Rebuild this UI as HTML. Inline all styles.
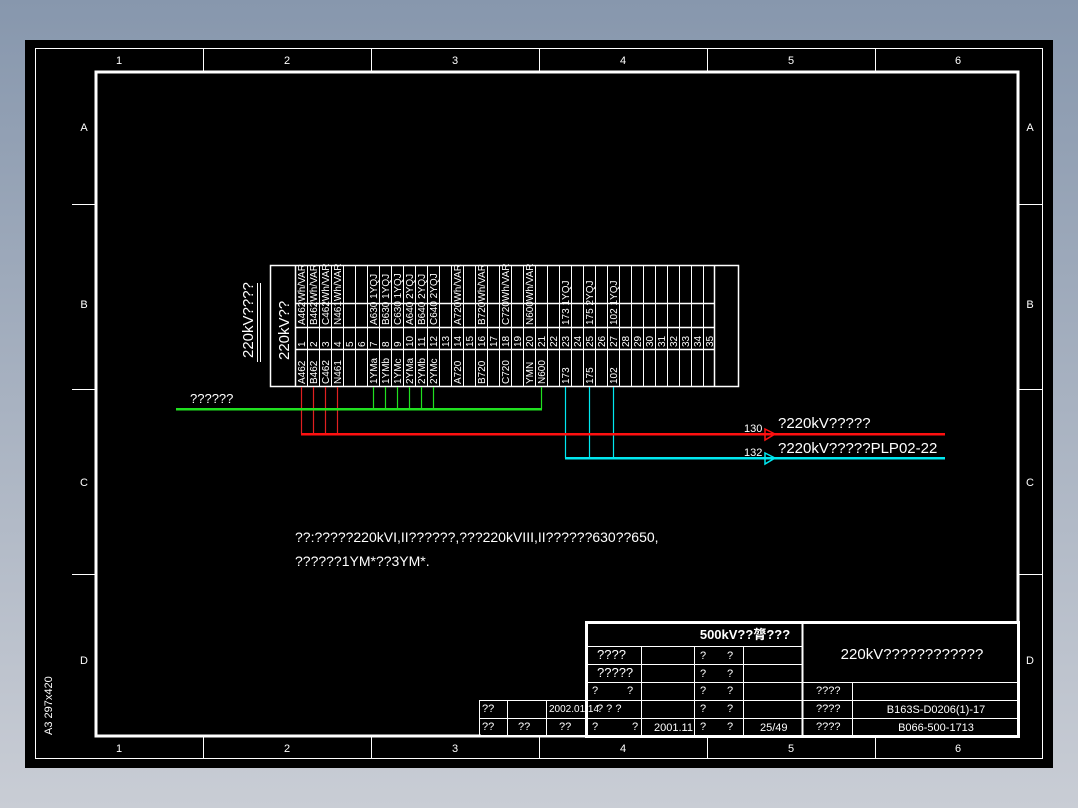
<!DOCTYPE html>
<html><head><meta charset="utf-8"><style>
html,body{margin:0;padding:0;width:1078px;height:808px;overflow:hidden;background:linear-gradient(#8797ad,#c9cdd5);}
svg{display:block}
text{font-family:"Liberation Sans","Noto Sans CJK SC",sans-serif;fill:#fff}
</style></head><body>
<svg width="1078" height="808" viewBox="0 0 1078 808" xmlns="http://www.w3.org/2000/svg">
<rect x="25" y="40" width="1028" height="728" fill="#000"/>
<rect x="35.5" y="48.5" width="1007" height="710" fill="none" stroke="#fff" stroke-width="1"/>
<rect x="96" y="72" width="922" height="664" fill="none" stroke="#fff" stroke-width="3"/>
<g stroke="#fff" stroke-width="1">
<line x1="203.5" y1="48" x2="203.5" y2="71"/><line x1="371.5" y1="48" x2="371.5" y2="71"/><line x1="539.5" y1="48" x2="539.5" y2="71"/><line x1="707.5" y1="48" x2="707.5" y2="71"/><line x1="875.5" y1="48" x2="875.5" y2="71"/>
<line x1="203.5" y1="737" x2="203.5" y2="758"/><line x1="371.5" y1="737" x2="371.5" y2="758"/><line x1="539.5" y1="737" x2="539.5" y2="758"/><line x1="707.5" y1="737" x2="707.5" y2="758"/><line x1="875.5" y1="737" x2="875.5" y2="758"/>
<line x1="72" y1="204.5" x2="95" y2="204.5"/><line x1="72" y1="389.5" x2="95" y2="389.5"/><line x1="72" y1="574.5" x2="95" y2="574.5"/>
<line x1="1019" y1="204.5" x2="1043" y2="204.5"/><line x1="1019" y1="389.5" x2="1043" y2="389.5"/><line x1="1019" y1="574.5" x2="1043" y2="574.5"/>
</g>
<g font-size="11" text-anchor="middle">
<text x="119" y="64">1</text><text x="287" y="64">2</text><text x="455" y="64">3</text><text x="623" y="64">4</text><text x="791" y="64">5</text><text x="958" y="64">6</text>
<text x="119" y="752">1</text><text x="287" y="752">2</text><text x="455" y="752">3</text><text x="623" y="752">4</text><text x="791" y="752">5</text><text x="958" y="752">6</text>
<text x="84" y="131">A</text><text x="84" y="308">B</text><text x="84" y="486">C</text><text x="84" y="664">D</text>
<text x="1030" y="131">A</text><text x="1030" y="308">B</text><text x="1030" y="486">C</text><text x="1030" y="664">D</text>
</g>
<text x="0" y="0" font-size="11" transform="translate(52,735) rotate(-90)">A3  297x420</text>

<!-- terminal block -->
<g stroke="#fff" stroke-width="1.5" fill="none">
<rect x="270.5" y="265.5" width="468" height="121"/>
<line x1="295.5" y1="265" x2="295.5" y2="387"/>
<line x1="714.5" y1="265" x2="714.5" y2="387"/>
<line x1="295" y1="303.5" x2="714" y2="303.5"/>
<line x1="295" y1="327.5" x2="714" y2="327.5"/>
<line x1="295" y1="349.5" x2="714" y2="349.5"/>
</g>
<g stroke="#fff" stroke-width="1" id="cols"></g>
<text font-size="15" transform="translate(289,360) rotate(-90)">220kV??</text>
<text font-size="15" transform="translate(253,358) rotate(-90)">220kV????</text>
<line x1="257.5" y1="283" x2="257.5" y2="362" stroke="#fff"/>
<line x1="260.5" y1="283" x2="260.5" y2="362" stroke="#fff"/>
<g id="ctext" font-size="10"></g>

<!-- wires -->
<g fill="none" stroke-width="1.2">
<g stroke="#e02020">
<line x1="301.5" y1="387" x2="301.5" y2="434"/><line x1="313.5" y1="387" x2="313.5" y2="434"/><line x1="325.5" y1="387" x2="325.5" y2="434"/><line x1="337.5" y1="387" x2="337.5" y2="434"/>
</g>
<g stroke="#20e020">
<line x1="373.5" y1="387" x2="373.5" y2="409"/><line x1="385.5" y1="387" x2="385.5" y2="409"/><line x1="397.5" y1="387" x2="397.5" y2="409"/><line x1="409.5" y1="387" x2="409.5" y2="409"/><line x1="421.5" y1="387" x2="421.5" y2="409"/><line x1="433.5" y1="387" x2="433.5" y2="409"/><line x1="541.5" y1="387" x2="541.5" y2="409"/>
</g>
<g stroke="#00e8f0">
<line x1="565.5" y1="387" x2="565.5" y2="458"/><line x1="589.5" y1="387" x2="589.5" y2="458"/><line x1="613.5" y1="387" x2="613.5" y2="458"/>
</g>
</g>
<rect x="176" y="408" width="366" height="2.5" fill="#20e020"/>
<rect x="301" y="433" width="644" height="2.5" fill="#ff1010"/>
<rect x="565" y="457" width="380" height="2.5" fill="#00e8f0"/>
<polygon points="765,429 775,434 765,440" fill="none" stroke="#ff1010" stroke-width="1.5"/>
<polygon points="765,453 775,458 765,464" fill="none" stroke="#00e8f0" stroke-width="1.5"/>
<text x="190" y="403" font-size="13">??????</text>
<text x="744" y="432" font-size="11">130</text>
<text x="778" y="428" font-size="15">?220kV?????</text>
<text x="744" y="456" font-size="11">132</text>
<text x="778" y="453" font-size="15">?220kV?????PLP02-22</text>

<text x="295" y="542" font-size="14">??:?????220kVI,II??????,???220kVIII,II??????630??650,</text>
<text x="295" y="566" font-size="14">??????1YM*??3YM*.</text>

<!-- title block -->
<rect x="481" y="700" width="106" height="36" fill="#000"/>
<g stroke="#fff" stroke-width="1" fill="none">
<rect x="479.5" y="700.5" width="107" height="35"/>
<line x1="479" y1="718.5" x2="587" y2="718.5"/>
<line x1="507.5" y1="700" x2="507.5" y2="736"/>
<line x1="546.5" y1="700" x2="546.5" y2="736"/>
</g>
<rect x="586.5" y="622.5" width="432" height="114" fill="#000" stroke="#fff" stroke-width="3"/>
<g stroke="#fff" stroke-width="1" fill="none">
<line x1="802.5" y1="622" x2="802.5" y2="736" stroke-width="2"/>
<line x1="587" y1="646.5" x2="802" y2="646.5"/>
<line x1="587" y1="664.5" x2="802" y2="664.5"/>
<line x1="587" y1="682.5" x2="1018" y2="682.5"/>
<line x1="587" y1="700.5" x2="1018" y2="700.5"/>
<line x1="587" y1="718.5" x2="1018" y2="718.5"/>
<line x1="641.5" y1="646" x2="641.5" y2="736"/>
<line x1="694.5" y1="646" x2="694.5" y2="736"/>
<line x1="743.5" y1="646" x2="743.5" y2="736"/>
<line x1="852.5" y1="682" x2="852.5" y2="736"/>
</g>
<g font-size="11">
<text x="482" y="712">??</text><text x="482" y="730">??</text><text x="518" y="730">??</text><text x="559" y="730">??</text>
<text x="549" y="712" font-size="10">2002.01.14</text>
<text x="745" y="639" font-size="13" font-weight="bold" text-anchor="middle">500kV??膂???</text>
<text x="597" y="659" font-size="13">????</text>
<text x="597" y="677" font-size="13">?????</text>
<text x="592" y="694">?</text><text x="627" y="694">?</text>
<text x="597" y="712">?  ?  ?</text>
<text x="592" y="730">?</text><text x="632" y="730">?</text>
<text x="654" y="731">2001.11</text>
<text x="700" y="659">?</text><text x="727" y="659">?</text>
<text x="700" y="677">?</text><text x="727" y="677">?</text>
<text x="700" y="694">?</text><text x="727" y="694">?</text>
<text x="700" y="712">?</text><text x="727" y="712">?</text>
<text x="700" y="730">?</text><text x="727" y="730">?</text>
<text x="760" y="731">25/49</text>
<text x="912" y="659" font-size="15" text-anchor="middle">220kV????????????</text>
<text x="816" y="694">????</text><text x="816" y="712">????</text><text x="816" y="730">????</text>
<text x="936" y="713" text-anchor="middle">B163S-D0206(1)-17</text>
<text x="936" y="731" text-anchor="middle">B066-500-1713</text>
</g>
<script>
(function(){
var ns="http://www.w3.org/2000/svg",g=document.getElementById('cols'),t=document.getElementById('ctext');
for(var i=1;i<35;i++){var x=295.5+i*12;var l=document.createElementNS(ns,'line');l.setAttribute('x1',x);l.setAttribute('x2',x);l.setAttribute('y1',265);l.setAttribute('y2',387);g.appendChild(l);}
function tx(col,y,s){var e=document.createElementNS(ns,'text');var x=295+(col-1)*12+10;e.setAttribute('transform','translate('+x+','+y+') rotate(-90)');e.textContent=s;t.appendChild(e);}
var top={1:'A462Wh/VAR',2:'B462Wh/VAR',3:'C462Wh/VAR',4:'N461Wh/VAR',7:'A630 1YQJ',8:'B630 1YQJ',9:'C630 1YQJ',10:'A640 2YQJ',11:'B640 2YQJ',12:'C640 2YQJ',14:'A720Wh/VAR',16:'B720Wh/VAR',18:'C720Wh/VAR',20:'N600Wh/VAR',23:'173  1YQJ',25:'175  2YQJ',27:'102  1YQJ'};
var bot={1:'A462',2:'B462',3:'C462',4:'N461',7:'1YMa',8:'1YMb',9:'1YMc',10:'2YMa',11:'2YMb',12:'2YMc',14:'A720',16:'B720',18:'C720',20:'YMN',21:'N600',23:'173',25:'175',27:'102'};
for(var k in top)tx(+k,325,top[k]);
for(var k in bot)tx(+k,384,bot[k]);
for(var i=1;i<=35;i++)tx(i,347,String(i));
})();
</script>
</svg>
</body></html>
